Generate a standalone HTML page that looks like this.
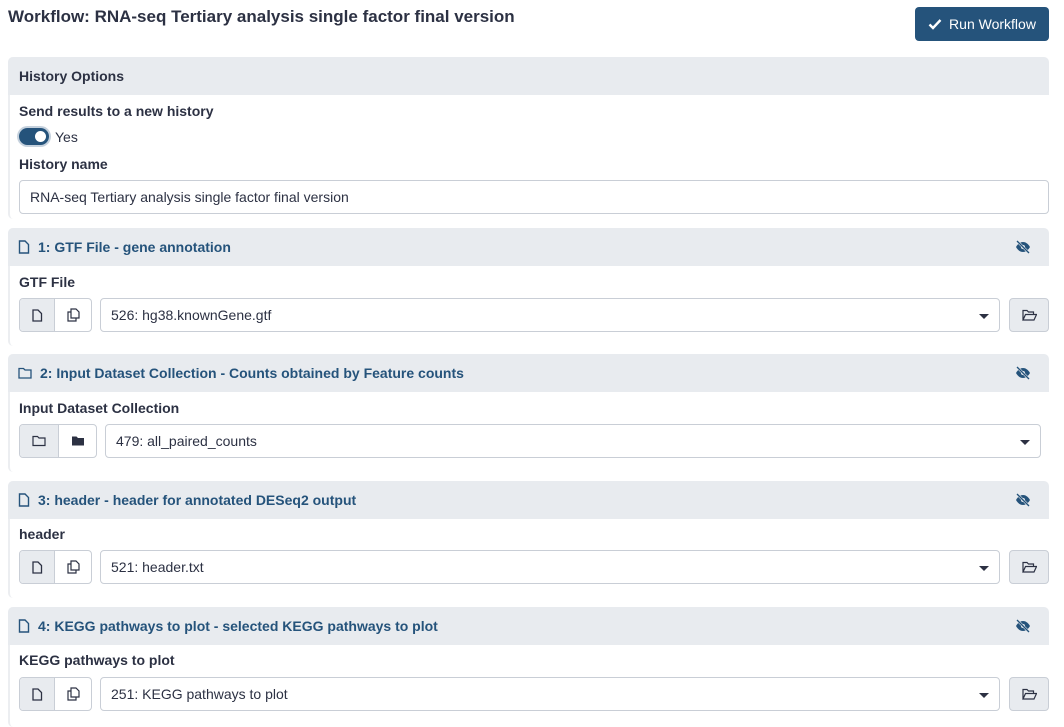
<!DOCTYPE html>
<html><head><meta charset="utf-8"><style>
*{box-sizing:border-box}
body{margin:0;width:1064px;height:720px;overflow:hidden;background:#fff;font-family:"Liberation Sans",Arial,sans-serif;color:#2c3143;font-size:14px}
.title{position:absolute;left:8px;top:7px;font-size:17px;font-weight:bold;color:#2c3143}
.run{position:absolute;left:915px;top:7px;width:134px;height:34px;background:#25537b;border-radius:4px;color:#fff;font-size:14px;display:flex;align-items:center;justify-content:center;gap:7px}
.card{position:absolute;left:8px;width:1041px;border-left:2px solid #eceef1;border-radius:5px 0 0 5px;background:#fff}
.hdr{height:38px;background:#e8ebef;border-radius:5px 5px 0 0;display:flex;align-items:center;padding-left:10px;font-weight:bold;font-size:14px;color:#25537b;position:relative;margin-left:-2px}
.hdr.plain{color:#2c3143;padding-left:11px}
.hdr svg{margin-right:8px}
.eye{position:absolute;right:10px;top:12px}
.lbl{position:absolute;left:9px;font-weight:bold;font-size:14px}
.inp{position:absolute;border:1px solid #c9ced6;border-radius:4px;height:34px;display:flex;align-items:center;padding-left:10px;font-size:14px;background:#fff}
.grp{position:absolute;height:34px;border:1px solid #c9ced6;border-radius:4px;display:flex;overflow:hidden}
.grp div{display:flex;align-items:center;justify-content:center}
.grp div:first-child{background:#e8ebef;border-right:1px solid #c9ced6}
.caret{position:absolute;right:10px;top:15px;width:0;height:0;border-left:5px solid transparent;border-right:5px solid transparent;border-top:5px solid #2c3143}
.browse{position:absolute;width:40px;height:34px;background:#e8ebef;border:1px solid #c9ced6;border-radius:4px;display:flex;align-items:center;justify-content:center}
</style></head><body>
<div class="title">Workflow: RNA-seq Tertiary analysis single factor final version</div>
<div class="run"><svg width="14" height="12" viewBox="0 0 14 12"><path d="M1.5 6.5l3.5 3.5 7.5-8" stroke="#fff" stroke-width="2.4" fill="none"/></svg>Run Workflow</div>

<div class="card" style="top:57px;height:162px">
<div class="hdr plain">History Options</div>
<div class="lbl" style="top:46px">Send results to a new history</div>
<div style="position:absolute;left:9px;top:71px;width:30px;height:17px;border-radius:9px;background:#25537b;box-shadow:0 0 0 2px #c5d1dd"><div style="position:absolute;right:3px;top:3px;width:11px;height:11px;border-radius:50%;background:#fff"></div></div>
<div style="position:absolute;left:45px;top:72px;font-size:14px">Yes</div>
<div class="lbl" style="top:99px">History name</div>
<div class="inp" style="left:9px;top:123px;width:1030px">RNA-seq Tertiary analysis single factor final version</div>
</div>

<div class="card" style="top:228px;height:118px">
<div class="hdr"><svg width="12" height="14" viewBox="0 0 12 14"><path d="M1.5 1h5.5l3.5 3.5v8.5h-9z" fill="none" stroke="#25537b" stroke-width="1.4"/></svg>1: GTF File - gene annotation<svg class="eye" width="16" height="14" viewBox="0 0 16 14"><path d="M1 7c2-3.5 4.5-5 7-5s5 1.5 7 5c-2 3.5-4.5 5-7 5s-5-1.5-7-5z" fill="#25537b"/><circle cx="8" cy="7" r="2" fill="#e8ebef"/><path d="M2 1l12 12" stroke="#e8ebef" stroke-width="2.5"/><path d="M2 1l12 12" stroke="#25537b" stroke-width="1.3"/></svg></div>
<div class="lbl" style="top:46px">GTF File</div>
<div class="grp" style="left:9px;top:70px;width:73px"><div style="width:35px"><svg width="11" height="13" viewBox="0 0 11 13"><path d="M1 1h5l3.5 3.5v7.5h-8.5z" fill="none" stroke="#2c3143" stroke-width="1.3"/></svg></div><div style="width:36px"><svg width="13" height="14" viewBox="0 0 13 14"><path d="M4 1h5l3 3v6h-8z M4 4h-3v9h8v-3" fill="none" stroke="#2c3143" stroke-width="1.2"/></svg></div></div>
<div class="inp" style="left:90px;top:70px;width:900px">526: hg38.knownGene.gtf<span class="caret"></span></div>
<div class="browse" style="left:999px;top:70px"><svg width="15" height="12" viewBox="0 0 15 12"><path d="M1 11V1.5h4l1.5 1.5h5v2.5M1 11l2.5-5.5h11l-2.5 5.5z" fill="none" stroke="#2c3143" stroke-width="1.2"/></svg></div>
</div>

<div class="card" style="top:354px;height:118px">
<div class="hdr"><svg width="14" height="12" viewBox="0 0 14 12"><path d="M1 1.5h4.5l1.5 1.5h6v8h-12z" fill="none" stroke="#25537b" stroke-width="1.3"/></svg>2: Input Dataset Collection - Counts obtained by Feature counts<svg class="eye" width="16" height="14" viewBox="0 0 16 14"><path d="M1 7c2-3.5 4.5-5 7-5s5 1.5 7 5c-2 3.5-4.5 5-7 5s-5-1.5-7-5z" fill="#25537b"/><circle cx="8" cy="7" r="2" fill="#e8ebef"/><path d="M2 1l12 12" stroke="#e8ebef" stroke-width="2.5"/><path d="M2 1l12 12" stroke="#25537b" stroke-width="1.3"/></svg></div>
<div class="lbl" style="top:46px">Input Dataset Collection</div>
<div class="grp" style="left:9px;top:70px;width:78px"><div style="width:39px"><svg width="14" height="12" viewBox="0 0 14 12"><path d="M1 1.5h4.5l1.5 1.5h6v7.5h-12z" fill="none" stroke="#2c3143" stroke-width="1.2"/></svg></div><div style="width:37px"><svg width="14" height="12" viewBox="0 0 14 12"><path d="M1 1.5h4.5l1.5 1.5h6v7.5h-12z" fill="#2c3143"/></svg></div></div>
<div class="inp" style="left:95px;top:70px;width:936px">479: all_paired_counts<span class="caret"></span></div>
</div>

<div class="card" style="top:481px;height:117px">
<div class="hdr"><svg width="12" height="14" viewBox="0 0 12 14"><path d="M1.5 1h5.5l3.5 3.5v8.5h-9z" fill="none" stroke="#25537b" stroke-width="1.4"/></svg>3: header - header for annotated DESeq2 output<svg class="eye" width="16" height="14" viewBox="0 0 16 14"><path d="M1 7c2-3.5 4.5-5 7-5s5 1.5 7 5c-2 3.5-4.5 5-7 5s-5-1.5-7-5z" fill="#25537b"/><circle cx="8" cy="7" r="2" fill="#e8ebef"/><path d="M2 1l12 12" stroke="#e8ebef" stroke-width="2.5"/><path d="M2 1l12 12" stroke="#25537b" stroke-width="1.3"/></svg></div>
<div class="lbl" style="top:45px">header</div>
<div class="grp" style="left:9px;top:69px;width:73px"><div style="width:35px"><svg width="11" height="13" viewBox="0 0 11 13"><path d="M1 1h5l3.5 3.5v7.5h-8.5z" fill="none" stroke="#2c3143" stroke-width="1.3"/></svg></div><div style="width:36px"><svg width="13" height="14" viewBox="0 0 13 14"><path d="M4 1h5l3 3v6h-8z M4 4h-3v9h8v-3" fill="none" stroke="#2c3143" stroke-width="1.2"/></svg></div></div>
<div class="inp" style="left:90px;top:69px;width:900px">521: header.txt<span class="caret"></span></div>
<div class="browse" style="left:999px;top:69px"><svg width="15" height="12" viewBox="0 0 15 12"><path d="M1 11V1.5h4l1.5 1.5h5v2.5M1 11l2.5-5.5h11l-2.5 5.5z" fill="none" stroke="#2c3143" stroke-width="1.2"/></svg></div>
</div>

<div class="card" style="top:607px;height:120px">
<div class="hdr"><svg width="12" height="14" viewBox="0 0 12 14"><path d="M1.5 1h5.5l3.5 3.5v8.5h-9z" fill="none" stroke="#25537b" stroke-width="1.4"/></svg>4: KEGG pathways to plot - selected KEGG pathways to plot<svg class="eye" width="16" height="14" viewBox="0 0 16 14"><path d="M1 7c2-3.5 4.5-5 7-5s5 1.5 7 5c-2 3.5-4.5 5-7 5s-5-1.5-7-5z" fill="#25537b"/><circle cx="8" cy="7" r="2" fill="#e8ebef"/><path d="M2 1l12 12" stroke="#e8ebef" stroke-width="2.5"/><path d="M2 1l12 12" stroke="#25537b" stroke-width="1.3"/></svg></div>
<div class="lbl" style="top:45px">KEGG pathways to plot</div>
<div class="grp" style="left:9px;top:70px;width:73px"><div style="width:35px"><svg width="11" height="13" viewBox="0 0 11 13"><path d="M1 1h5l3.5 3.5v7.5h-8.5z" fill="none" stroke="#2c3143" stroke-width="1.3"/></svg></div><div style="width:36px"><svg width="13" height="14" viewBox="0 0 13 14"><path d="M4 1h5l3 3v6h-8z M4 4h-3v9h8v-3" fill="none" stroke="#2c3143" stroke-width="1.2"/></svg></div></div>
<div class="inp" style="left:90px;top:70px;width:900px">251: KEGG pathways to plot<span class="caret"></span></div>
<div class="browse" style="left:999px;top:70px"><svg width="15" height="12" viewBox="0 0 15 12"><path d="M1 11V1.5h4l1.5 1.5h5v2.5M1 11l2.5-5.5h11l-2.5 5.5z" fill="none" stroke="#2c3143" stroke-width="1.2"/></svg></div>
</div>
</body></html>
